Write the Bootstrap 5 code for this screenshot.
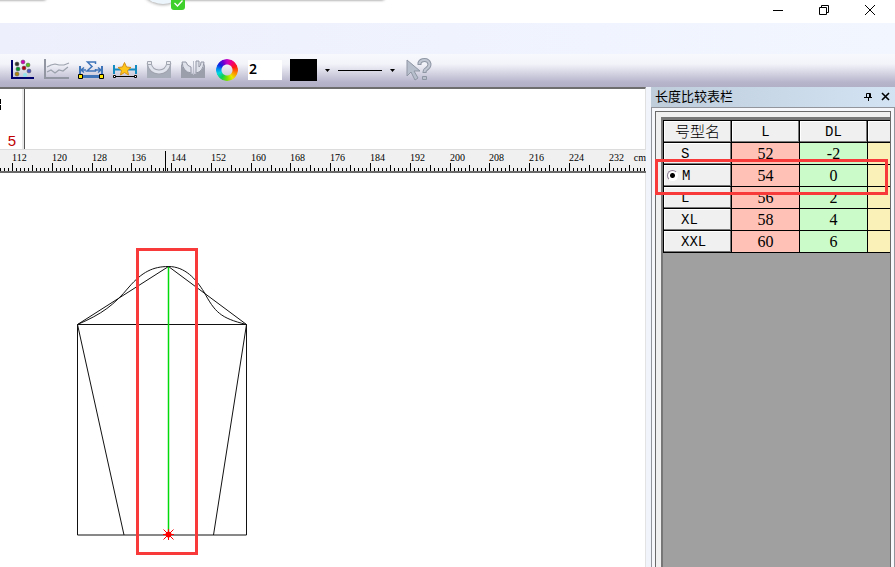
<!DOCTYPE html>
<html lang="zh-CN">
<head>
<meta charset="utf-8">
<meta name="viewport" content="width=device-width, initial-scale=1">
<title>长度比较表栏</title>
<link href="https://cdn.jsdelivr.net/npm/bootstrap@5.3.0/dist/css/bootstrap.min.css" rel="stylesheet">
<style>
body{font-family:"Liberation Sans","Noto Sans CJK SC",sans-serif;color:#000;background:#fff}
svg{display:block}
button{background:none;border:0;padding:0;color:#000}
.titlebar{height:23px;padding-right:2px}
.titlebar .winbtn{width:46px;height:20px}
.shadow-bits{left:0;top:0}
.menubar{height:31px;background:linear-gradient(90deg,#edf0fc,#f2f6ff)}
.toolbar{height:33px;background:linear-gradient(#f7f9fd 0,#f3f4fa 30%,#b7b5cc 85%,#b1b0c6);padding:0 0 1px 10px}
.toolbar .tool{width:26px;height:24px;margin-right:8px}
.toolbar input{width:34px;height:20px;border:0;border-radius:0;padding:0 1px 3px;font:600 14px "Noto Sans",sans-serif;background:#fff;color:#000}
.wheel{width:22px;height:22px;border-radius:50%;margin-left:2px;background:conic-gradient(#c000c8,#f0007a 35deg,#ff1a10 70deg,#ff8c00 110deg,#e8e800 145deg,#7be000 180deg,#10d050 215deg,#00d8e0 250deg,#0090f0 275deg,#1020e0 305deg,#6a00d0 335deg,#c000c8);-webkit-mask:radial-gradient(transparent 5px,#000 6px);mask:radial-gradient(transparent 5px,#000 6px)}
.swatch{width:27px;height:22px;background:#000}
.work{background:#f2f4fb;padding-right:5px}
.topstrip{height:63px;border-top:2px solid #6e6e6e;border-bottom:1px solid #dcdcdc;border-right:1px solid #e0e0e0;background:#fff}
.sizebox{width:25px;border-right:1px solid #555;box-shadow:inset -2px 0 #e8e8e8;padding:0 8px 1px 0;color:#c00000;font:15px/15px "Liberation Sans",sans-serif}
.ruler{height:23px;background:#f0f0f0;border-bottom:2px solid #6a6a6a}
.ruler text{font:10px "Liberation Serif",serif;fill:#000}
.canvas{background:#fff;border-right:1px solid #e3e3e3}
.sidepanel{width:244px}
.panelhead{height:20px;background:linear-gradient(90deg,#bfcddb,#d3e3f3);padding:0 5px 2px 4px}
.panelhead h1{font:13px/18px "Noto Sans CJK SC",sans-serif;margin:0}
.panelbody{border:1px solid #92959c;border-bottom:0;background:#f6f7fb;padding:3px 3px 0}
.inset1{border:1px solid #6a6a6a;border-bottom:0;background:#f0f0f0;padding:5px 0 0 5px}
.inset2{background:#a0a0a0;border:solid #777;border-width:3px 0 0 2px;overflow:hidden}
.sizes{width:273px;table-layout:fixed;border-collapse:separate;border-spacing:0;border-left:1px solid #000;border-top:1px solid #000}
.sizes th,.sizes td{width:68px;height:22px;padding:0;border-right:1px solid #000;border-bottom:1px solid #000;font-weight:400;text-align:center;font:14px/20px "Liberation Mono","Noto Sans CJK SC",monospace}
.sizes td{font:16px/20px "Liberation Serif",serif}
.sizes th{background:#f0f0f0;box-shadow:inset -1px -1px #777,inset 1px 1px #fff}
.sizes th.zh{font:300 15px/18px "Noto Sans CJK SC",sans-serif;padding-bottom:2px}
.sizes tbody th{text-align:left;padding-left:17px}
.sizes tbody th.picked{padding-left:3px}
.pink{background:#ffc0b5}.mint{background:#cafbc9}.cream{background:#f9f1b8}
.sizes input{appearance:none;width:11px;height:11px;margin:0;border:1px solid #8c7c94;border-right-color:#fff;border-bottom-color:#fff;border-radius:50%;background:radial-gradient(#000 0 2px,#fff 3px);flex:none}
.highlight{left:4px;top:72px;right:7px;height:36px;border:3px solid #f93a3a;pointer-events:none}
</style>
<script src="https://cdn.jsdelivr.net/npm/bootstrap@5.3.0/dist/js/bootstrap.bundle.min.js"></script>
</head>
<body class="vh-100 d-flex flex-column overflow-hidden">
<header class="titlebar position-relative d-flex justify-content-end flex-shrink-0">
  <svg class="shadow-bits position-absolute" width="400" height="14" aria-hidden="true">
    <defs><filter id="soft" x="-10%" y="-200%" width="120%" height="500%"><feGaussianBlur stdDeviation="1.5"/></filter></defs>
    <path d="M-5-6H48L45 0H-5ZM180-6H388L383 0H180Z" fill="#777" filter="url(#soft)"/>
    <circle cx="163" cy="-20" r="25" fill="#aaa" filter="url(#soft)"/><circle cx="163" cy="-21" r="25" fill="#edf5fc"/>
    <path d="M171-4h14V7q0 3-3 3h-8q-3 0-3-3Z" fill="#3fd02b"/><path d="M174.500 3l3 3 5-5.500" fill="none" stroke="#fff" stroke-width="1.300"/>
  </svg>
  <button class="winbtn d-flex align-items-center justify-content-center" aria-label="最小化"><svg width="12" height="12"><path d="M1 6.500h10" stroke="#000"/></svg></button>
  <button class="winbtn d-flex align-items-center justify-content-center" aria-label="还原"><svg width="12" height="12" fill="none" stroke="#000"><path d="M1.500 3.500h7v7h-7zM3.500 3V1.500h7v7H9"/></svg></button>
  <button class="winbtn d-flex align-items-center justify-content-center" aria-label="关闭"><svg width="12" height="12"><path d="M1 1l10 10M11 1L1 11" stroke="#000"/></svg></button>
</header>
<div class="menubar flex-shrink-0"></div>
<nav class="toolbar d-flex align-items-center flex-shrink-0" aria-label="工具栏">
  <button class="tool" aria-label="点图"><svg width="26" height="24"><path d="M2 2v18h22" fill="none" stroke="#00006e" stroke-width="2"/><g stroke="#555" stroke-width=".5"><circle cx="7" cy="6" r="2" fill="#333"/><circle cx="13" cy="4" r="2" fill="#d000b0"/><circle cx="18" cy="7" r="2" fill="#54c51b"/><circle cx="8" cy="11" r="2" fill="#00952b"/><circle cx="14" cy="10" r="2" fill="#b00010"/><circle cx="19" cy="13" r="2" fill="#4852c5"/><circle cx="7" cy="16" r="2" fill="#b18406"/><circle cx="15" cy="17" r="2" fill="#91e4ee" stroke="none"/></g></svg></button>
  <button class="tool" aria-label="曲线图"><svg width="26" height="24" fill="none"><path d="M1 1v19h24" stroke="#9196a2" stroke-width="2"/><path d="M3 9l4-2 4-1 4 1 5 0 5-2M3 14l4-2 4 3 4-3 4 1 5-4" stroke="#9ca2ac" stroke-width="1.200"/></svg></button>
  <button class="tool" aria-label="求和"><svg width="26" height="24"><g fill="none" stroke="#3f74b8"><path d="M2 8v9M24 8v9" stroke-width="2"/><path d="M2 18.500h22" stroke-width="3"/><path d="M3 12h5M18 12h5M6 9.500l-3 2.500 3 2.500M20 9.500l3 2.500-3 2.500" stroke-width="1.500"/><path d="M17.500 6V4H9.500l4.500 4.500-5 4.500h8.500v-2" stroke-width="1.500"/></g><path d="M.5 16.500h4v4h-4zM21.500 16.500h4v4h-4z" fill="#ffea00" stroke="#000"/></svg></button>
  <button class="tool" aria-label="星标长度"><svg width="26" height="24"><path d="M2 7v9M24 7v9M2 11.500h22" stroke="#138ac0" stroke-width="2"/><path d="M12.500 4.500l2 4.500 4.500.5-3.500 3 1 4.500-4-2.500-4 2.500 1-4.500-3.500-3 4.500-.5Z" fill="#ffc61a" stroke="#d49018"/><path d="M3 18.500h21" stroke="#000"/><path d="M1.500 17.500h2v2h-2zM22.500 17.500h2v2h-2z" fill="#fff" stroke="#000"/></svg></button>
  <button class="tool" aria-label="弧形"><svg width="26" height="24"><path d="M1 4v16h24V4q-4 9-12 9T1 4" fill="#a8adba"/><path d="M3 5q2 9 10 9t10-9" fill="none" stroke="#a0a4ae" stroke-width="5"/><path d="M3 5q2 9 10 9t10-9" fill="none" stroke="#e1e4ec" stroke-width="3"/><path d="M1.500 3.500h4v3h-4zM20.500 3.500h4v3h-4z" fill="#e8eaf0" stroke="#a2a6b1"/></svg></button>
  <button class="tool" aria-label="对称弧形"><svg width="26" height="24"><path d="M1 5v15h24V5q-2 9-11 11Q4 15 1 5" fill="#9b9fac"/><path d="M2 4q1 10 9 11V9Q7 8 6 4ZM24 4q-1 10-8 11V3h3v6q2-1 2-5Z" fill="#dfe2ea" stroke="#9397a4"/><path d="M13.500 3v14" stroke="#b9bdc9"/></svg></button>
  <button class="tool me-0" aria-label="颜色"><span class="wheel d-block"></span></button>
  <input class="ms-2" type="text" value="2" aria-label="线宽">
  <button class="swatch ms-2" aria-label="线条颜色"></button>
  <button class="ms-2" aria-label="选择线条颜色"><svg width="5" height="3"><path d="M0 0h5L2.500 3Z"/></svg></button>
  <button class="d-flex align-items-center gap-2 ms-2" aria-label="线型"><svg width="44" height="3"><path d="M0 1.500h44" stroke="#000"/></svg><svg width="5" height="3"><path d="M0 0h5L2.500 3Z"/></svg></button>
  <button class="ms-2" aria-label="帮助"><svg width="32" height="26"><path d="M4 3v16l4-4 4 8 3-2-4-7h6Z" fill="#b8bfcc" stroke="#8f96a4"/><path d="M16.500 8V6q1-3 5-3t5 4q0 3-3 5-2 1-2 4" fill="none" stroke="#8f96a4" stroke-width="4"/><path d="M16.500 7V6q1-3 5-3t5 4q0 3-3 5-2 1-2 3" fill="none" stroke="#c2c8d3" stroke-width="2"/><path d="M19.500 19.500h4v3h-4z" fill="#bac1cd" stroke="#8f96a4"/></svg></button>
</nav>
<div class="d-flex flex-grow-1 overflow-hidden">
  <main class="work d-flex flex-column flex-grow-1 overflow-hidden">
    <div class="topstrip d-flex flex-shrink-0"><div class="sizebox position-relative d-flex align-items-end justify-content-end"><svg class="position-absolute start-0 top-0" width="2" height="24" aria-hidden="true"><path d="M0 10h1v5H0zM0 16h1v5H0z"/></svg>5</div></div>
    <svg class="ruler w-100 flex-shrink-0" id="ruler" role="img" aria-label="标尺 cm"></svg>
    <div class="canvas flex-grow-1 overflow-hidden">
      <svg width="300" height="394" fill="none" stroke="#111" role="img" aria-label="袖片图">
        <path d="M77.500 151.500H246.500V362H77.500ZM77.500 151.500L168.500 93.500L246.500 151.500M77.500 151.500L124 362M246.500 151.500L213.500 362"/>
        <path d="M77.500 151.500C102 141 114 132 129 114C142 99 153 93.500 168.500 93.500C185 93.500 196 106 204 119C215 139 220 145 246.500 151.500"/>
        <path d="M168.500 94V358" stroke="#00db09" stroke-width="1.500"/>
        <path d="M163 361.500h11M168.500 356v11M163.500 356.500l10 10M173.500 356.500l-10 10" stroke="#f00"/><circle cx="168.500" cy="361.500" r="3" fill="#f00" stroke="none"/>
        <rect x="137.500" y="76.500" width="59" height="304" stroke="#f93a3a" stroke-width="3"/>
      </svg>
    </div>
  </main>
  <aside class="sidepanel position-relative d-flex flex-column flex-shrink-0">
    <div class="panelhead d-flex align-items-center"><h1 class="flex-grow-1">长度比较表栏</h1>
      <button class="me-2" aria-label="固定"><svg width="9" height="9" fill="none" stroke="#000"><path d="M2.500 5V1.500h4V5M0 5.500h8M4.500 6v3M5.500 1v4"/></svg></button>
      <button aria-label="关闭栏"><svg width="9" height="9"><path d="M1 1l7 7M8 1L1 8" stroke="#000" stroke-width="1.600"/></svg></button></div>
    <div class="panelbody d-flex flex-grow-1"><div class="inset1 d-flex w-100"><div class="inset2 w-100">
      <table class="sizes">
        <thead><tr><th class="zh">号型名</th><th>L</th><th>DL</th><th></th></tr></thead>
        <tbody>
          <tr><th>S</th><td class="pink">52</td><td class="mint">-2</td><td class="cream"></td></tr>
          <tr><th class="picked"><span class="d-flex align-items-center"><input type="radio" id="base" checked><label for="base" class="ps-1">M</label></span></th><td class="pink">54</td><td class="mint">0</td><td class="cream"></td></tr>
          <tr><th>L</th><td class="pink">56</td><td class="mint">2</td><td class="cream"></td></tr>
          <tr><th>XL</th><td class="pink">58</td><td class="mint">4</td><td class="cream"></td></tr>
          <tr><th>XXL</th><td class="pink">60</td><td class="mint">6</td><td class="cream"></td></tr>
        </tbody>
      </table>
    </div></div></div>
    <div class="highlight position-absolute"></div>
  </aside>
</div>
<script>
// Ruler: a tick every 0.8 cm, taller at each fifth, labelled at each tenth.
const unit = 179 / 45;
let marks = '';
for (let i = -3; i < 160; i++) {
  const x = Math.round(12 + i * unit) + 0.5;
  const h = i % 10 === 0 ? 8 : i % 5 === 0 ? 6 : 3;
  marks += `M${x} 21v-${h}`;
}
let labels = '';
for (let k = 0; k <= 15; k++) labels += `<text x="${Math.round(12 + k * 10 * unit)}" y="11">${112 + k * 8}</text>`;
document.getElementById('ruler').innerHTML = `<path d="${marks}M165.500 1v20" stroke="#000"/>${labels}<text x="100%" y="11" text-anchor="end">cm</text>`;
</script>
</body>
</html>
